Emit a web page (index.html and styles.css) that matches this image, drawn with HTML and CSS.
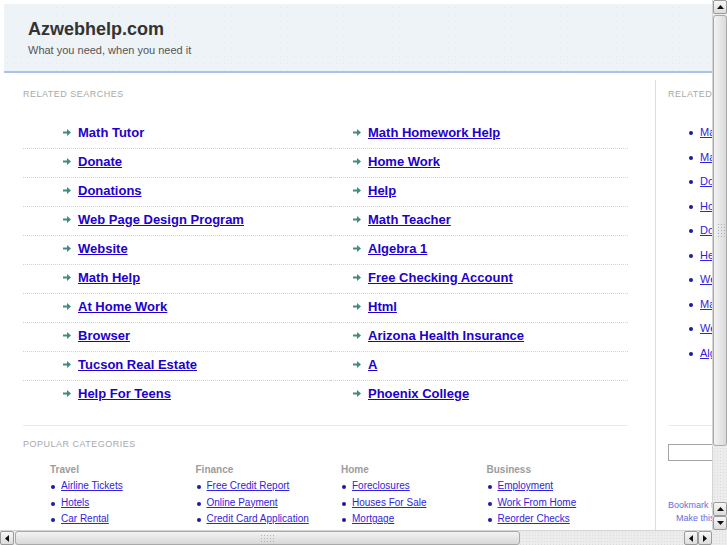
FILE: index.html
```html
<!DOCTYPE html>
<html>
<head>
<meta charset="utf-8">
<title>Azwebhelp.com</title>
<link rel="stylesheet" href="styles.css">
</head>
<body>
<div class="page">
  <header class="hdr">
    <h1>Azwebhelp.com</h1>
    <p>What you need, when you need it</p>
  </header>
  <div class="main">
    <section class="left">
      <h2 class="label">Related Searches</h2>
      <div class="rs">
        <ul class="col col1">
          <li><svg class="arr" viewBox="0 0 8 7"><path d="M0 2.5h4V0l4 3.5L4 7V4.5H0z"/></svg><a class="plain" href="#">Math Tutor</a></li>
          <li><svg class="arr" viewBox="0 0 8 7"><path d="M0 2.5h4V0l4 3.5L4 7V4.5H0z"/></svg><a href="#">Donate</a></li>
          <li><svg class="arr" viewBox="0 0 8 7"><path d="M0 2.5h4V0l4 3.5L4 7V4.5H0z"/></svg><a href="#">Donations</a></li>
          <li><svg class="arr" viewBox="0 0 8 7"><path d="M0 2.5h4V0l4 3.5L4 7V4.5H0z"/></svg><a href="#">Web Page Design Program</a></li>
          <li><svg class="arr" viewBox="0 0 8 7"><path d="M0 2.5h4V0l4 3.5L4 7V4.5H0z"/></svg><a href="#">Website</a></li>
          <li><svg class="arr" viewBox="0 0 8 7"><path d="M0 2.5h4V0l4 3.5L4 7V4.5H0z"/></svg><a href="#">Math Help</a></li>
          <li><svg class="arr" viewBox="0 0 8 7"><path d="M0 2.5h4V0l4 3.5L4 7V4.5H0z"/></svg><a href="#">At Home Work</a></li>
          <li><svg class="arr" viewBox="0 0 8 7"><path d="M0 2.5h4V0l4 3.5L4 7V4.5H0z"/></svg><a href="#">Browser</a></li>
          <li><svg class="arr" viewBox="0 0 8 7"><path d="M0 2.5h4V0l4 3.5L4 7V4.5H0z"/></svg><a href="#">Tucson Real Estate</a></li>
          <li><svg class="arr" viewBox="0 0 8 7"><path d="M0 2.5h4V0l4 3.5L4 7V4.5H0z"/></svg><a href="#">Help For Teens</a></li>
        </ul>
        <ul class="col col2">
          <li><svg class="arr" viewBox="0 0 8 7"><path d="M0 2.5h4V0l4 3.5L4 7V4.5H0z"/></svg><a href="#">Math Homework Help</a></li>
          <li><svg class="arr" viewBox="0 0 8 7"><path d="M0 2.5h4V0l4 3.5L4 7V4.5H0z"/></svg><a href="#">Home Work</a></li>
          <li><svg class="arr" viewBox="0 0 8 7"><path d="M0 2.5h4V0l4 3.5L4 7V4.5H0z"/></svg><a href="#">Help</a></li>
          <li><svg class="arr" viewBox="0 0 8 7"><path d="M0 2.5h4V0l4 3.5L4 7V4.5H0z"/></svg><a href="#">Math Teacher</a></li>
          <li><svg class="arr" viewBox="0 0 8 7"><path d="M0 2.5h4V0l4 3.5L4 7V4.5H0z"/></svg><a href="#">Algebra 1</a></li>
          <li><svg class="arr" viewBox="0 0 8 7"><path d="M0 2.5h4V0l4 3.5L4 7V4.5H0z"/></svg><a href="#">Free Checking Account</a></li>
          <li><svg class="arr" viewBox="0 0 8 7"><path d="M0 2.5h4V0l4 3.5L4 7V4.5H0z"/></svg><a href="#">Html</a></li>
          <li><svg class="arr" viewBox="0 0 8 7"><path d="M0 2.5h4V0l4 3.5L4 7V4.5H0z"/></svg><a href="#">Arizona Health Insurance</a></li>
          <li><svg class="arr" viewBox="0 0 8 7"><path d="M0 2.5h4V0l4 3.5L4 7V4.5H0z"/></svg><a href="#">A</a></li>
          <li><svg class="arr" viewBox="0 0 8 7"><path d="M0 2.5h4V0l4 3.5L4 7V4.5H0z"/></svg><a href="#">Phoenix College</a></li>
        </ul>
      </div>
      <div class="sep"></div>
      <h2 class="label label-pop">Popular Categories</h2>
      <div class="cats">
        <div class="cat">
          <h3>Travel</h3>
          <ul>
            <li><a href="#">Airline Tickets</a></li>
            <li><a href="#">Hotels</a></li>
            <li><a href="#">Car Rental</a></li>
          </ul>
        </div>
        <div class="cat">
          <h3>Finance</h3>
          <ul>
            <li><a href="#">Free Credit Report</a></li>
            <li><a href="#">Online Payment</a></li>
            <li><a href="#">Credit Card Application</a></li>
          </ul>
        </div>
        <div class="cat">
          <h3>Home</h3>
          <ul>
            <li><a href="#">Foreclosures</a></li>
            <li><a href="#">Houses For Sale</a></li>
            <li><a href="#">Mortgage</a></li>
          </ul>
        </div>
        <div class="cat">
          <h3>Business</h3>
          <ul>
            <li><a href="#">Employment</a></li>
            <li><a href="#">Work From Home</a></li>
            <li><a href="#">Reorder Checks</a></li>
          </ul>
        </div>
      </div>
    </section>
    <aside class="right">
      <h2 class="label">Related Searches</h2>
      <ul class="side-list">
        <li><a href="#">Math Tutor</a></li>
        <li><a href="#">Math Homework Help</a></li>
        <li><a href="#">Donate</a></li>
        <li><a href="#">Home Work</a></li>
        <li><a href="#">Donations</a></li>
        <li><a href="#">Help</a></li>
        <li><a href="#">Web Page Design Program</a></li>
        <li><a href="#">Math Teacher</a></li>
        <li><a href="#">Website</a></li>
        <li><a href="#">Algebra 1</a></li>
      </ul>
      <div class="side-sep"></div>
      <input class="search" type="text">
      <div class="bm">
        <a class="bm1" href="#">Bookmark this page</a>
        <a class="bm2" href="#">Make this your Homepage</a>
      </div>
    </aside>
  </div>
</div>

<div class="vbar">
  <div class="sbtn"><svg viewBox="0 0 7 4"><path d="M0 4L3.5 0 7 4z"/></svg></div>
  <div class="vthumb"><span class="grip vgrip"></span></div>
  <div class="track"></div>
  <div class="sbtn"><svg viewBox="0 0 7 4"><path d="M0 4L3.5 0 7 4z"/></svg></div>
  <div class="sbtn"><svg viewBox="0 0 7 4"><path d="M0 0L3.5 4 7 0z"/></svg></div>
</div>
<div class="hbar">
  <div class="sbtn"><svg class="hv" viewBox="0 0 4 7"><path d="M4 0L0 3.5 4 7z"/></svg></div>
  <div class="hthumb"><span class="grip hgrip"></span></div>
  <div class="track"></div>
  <div class="sbtn"><svg class="hv" viewBox="0 0 4 7"><path d="M4 0L0 3.5 4 7z"/></svg></div>
  <div class="sbtn"><svg class="hv" viewBox="0 0 4 7"><path d="M0 0L4 3.5 0 7z"/></svg></div>
</div>
<div class="corner"></div>
</body>
</html>
```
FILE: styles.css
```css
html, body {
  margin: 0;
  padding: 0;
  height: 100%;
  overflow: hidden;
  background: #fff;
}
body {
  font-family: "Liberation Sans", Arial, Helvetica, sans-serif;
}
.page {
  width: 1000px;
  padding: 4px 0 0 4px;
}
.hdr {
  box-sizing: border-box;
  height: 69px;
  padding: 14px 0 0 24px;
  background-color: #eef3f7;
  background-image: radial-gradient(circle, #e2e9ee 0.7px, transparent 1px);
  background-size: 7px 7px;
  border-bottom: 2px solid #abc4e6;
}
.hdr h1 {
  margin: 0;
  font-size: 18px;
  line-height: 22px;
  font-weight: bold;
  color: #333;
}
.hdr p {
  margin: 3px 0 0;
  font-size: 11px;
  line-height: 14px;
  color: #555;
}
.main {
  display: flex;
  align-items: stretch;
  min-height: 600px;
  padding-top: 7px;
}
.left {
  margin-left: 19px;
  width: 605px;
  flex: none;
}
.label {
  margin: 9px 0 0;
  font-size: 9px;
  line-height: 11px;
  letter-spacing: 0.5px;
  font-weight: normal;
  text-transform: uppercase;
  color: #a8a8a8;
}
.rs {
  display: grid;
  grid-template-columns: 307px 298px;
  margin-top: 20px;
}
.col {
  list-style: none;
  margin: 0;
  padding: 0;
}
.col li {
  box-sizing: border-box;
  display: flex;
  align-items: center;
  height: 29px;
  padding-bottom: 3px;
  border-bottom: 1px dotted #c3d5ee;
}
.col li:last-child {
  border-bottom-color: transparent;
}
.col1 li { padding-left: 40px; }
.col2 li { padding-left: 23px; }
.arr {
  width: 8px;
  height: 7px;
  margin-right: 7px;
  fill: #3e8d80;
  flex: none;
}
.col a {
  font-size: 13px;
  font-weight: bold;
  color: #2200cc;
  text-decoration: underline;
}
.col a.plain {
  text-decoration: none;
}
.sep {
  margin-top: 15px;
  border-top: 1px solid #e3ebf3;
}
.label-pop {
  margin-top: 13px;
}
.cats {
  display: grid;
  grid-template-columns: repeat(4, 145.5px);
  padding-left: 27px;
  margin-top: 13px;
}
.cat h3 {
  margin: 0;
  font-size: 10px;
  line-height: 13px;
  font-weight: bold;
  color: #9c9c9c;
}
.cat ul {
  list-style: none;
  margin: 2px 0 0;
  padding: 0;
}
.cat li {
  position: relative;
  padding-left: 11px;
  font-size: 10px;
  line-height: 16.5px;
}
.cat li::before,
.side-list li::before {
  content: "";
  position: absolute;
  width: 4px;
  height: 4px;
  border-radius: 50%;
  background: #1c1c9c;
}
.cat li::before {
  left: 1px;
  top: 7px;
}
.cat a {
  color: #3322dd;
  text-decoration: underline;
}
.right {
  flex: none;
  width: 260px;
  margin-left: 27px;
  padding-left: 12px;
  border-left: 1px solid #d3dff0;
}
.side-list {
  list-style: none;
  margin: 20px 0 0;
  padding: 0 0 0 32px;
}
.side-list li {
  position: relative;
  font-size: 11px;
  line-height: 24.5px;
}
.side-list li::before {
  left: -11px;
  top: 11px;
}
.side-list a {
  color: #3322dd;
  text-decoration: underline;
}
.side-sep {
  margin-top: 60px;
  border-top: 1px solid #e3ebf3;
}
.search {
  display: block;
  box-sizing: border-box;
  margin: 18px 0 0;
  width: 150px;
  height: 17px;
  border: 1px solid #a5a5a5;
  padding: 0;
}
.bm {
  margin-top: 38px;
}
.bm a {
  display: block;
  font-size: 9px;
  line-height: 12.5px;
  color: #6b6bd6;
  text-decoration: none;
}
.bm2 {
  padding-left: 8px;
}

/* simulated browser scrollbars */
.vbar, .hbar, .corner {
  position: fixed;
  box-sizing: border-box;
  background-color: #ececec;
  background-image: radial-gradient(circle, #dcdcdc 0.6px, transparent 0.9px);
  background-size: 3px 3px;
}
.vbar {
  left: 712px;
  top: 0;
  width: 15px;
  height: 530px;
  display: flex;
  flex-direction: column;
  border-left: 1px solid #d4d4d4;
}
.hbar {
  left: 0;
  top: 530px;
  width: 712px;
  height: 15px;
  display: flex;
  border-top: 1px solid #d4d4d4;
}
.corner {
  left: 712px;
  top: 530px;
  width: 15px;
  height: 15px;
}
.sbtn {
  flex: none;
  box-sizing: border-box;
  width: 14px;
  height: 14px;
  display: flex;
  align-items: center;
  justify-content: center;
  background: linear-gradient(#f7f7f7, #dcdcdc);
  border: 1px solid #9b9b9b;
  border-radius: 2px;
}
.sbtn svg {
  width: 7px;
  height: 4px;
  fill: #111;
}
.sbtn svg.hv {
  width: 4px;
  height: 7px;
}
.vthumb {
  flex: none;
  height: 431px;
  margin-top: 1px;
  box-sizing: border-box;
  border: 1px solid #a9a9a9;
  border-radius: 3px;
  background: linear-gradient(to right, #f3f3f3, #dadada);
  position: relative;
}
.hthumb {
  flex: none;
  width: 505px;
  margin-left: 1px;
  box-sizing: border-box;
  border: 1px solid #a9a9a9;
  border-radius: 3px;
  background: linear-gradient(#f3f3f3, #d8d8d8);
  position: relative;
}
.track {
  flex: 1;
}
.grip {
  position: absolute;
  background-image: radial-gradient(circle, #b0b0b0 0.6px, transparent 0.9px);
  background-size: 3px 3px;
}
.vgrip {
  left: 3px;
  top: 207px;
  width: 8px;
  height: 16px;
}
.hgrip {
  left: 244px;
  top: 2px;
  width: 16px;
  height: 9px;
}
```
